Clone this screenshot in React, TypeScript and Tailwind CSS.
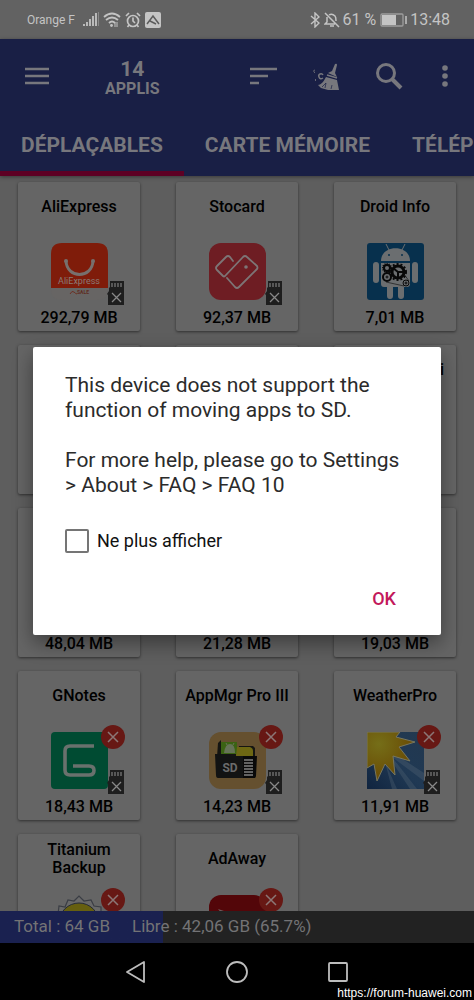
import type { ReactNode } from "react"

interface AppItem {
  id: string
  name?: string
  nameAlign?: string
  size?: string
  icon?: ReactNode
  hasError?: boolean
  noSd?: boolean
}

function AliExpressIcon() {
  return (
    <svg viewBox="0 0 57 57" className="h-full w-full">
      <path d="M0 45V11Q0 0 11 0H46Q57 0 57 11V45Z" fill="#7f1c0a" />
      <path d="M0 45H57V46Q57 57 46 57H11Q0 57 0 46Z" fill="#676564" />
      <path d="M15 18C16 36 41 36 42 18" fill="none" stroke="#77706d" strokeWidth="3" />
      <circle cx="15" cy="18" r="2" fill="#77706d" />
      <circle cx="42" cy="18" r="2" fill="#77706d" />
      <text x="28" y="41" textAnchor="middle" fontSize="9" fill="#8a7b76">AliExpress</text>
      <path d="M19 51Q21 47 23 49T26 51" fill="none" stroke="#6e3023" strokeWidth="1" />
      <text x="32" y="51" textAnchor="middle" fontSize="5" fontWeight="700" fill="#5f2c22">SALE</text>
    </svg>
  )
}

function StocardIcon() {
  return (
    <svg viewBox="0 0 57 57" className="h-full w-full">
      <rect width="57" height="57" rx="12" fill="#6e1d23" />
      <g fill="none" stroke="#7d7576" strokeWidth="1.8" strokeLinejoin="round" strokeLinecap="round">
        <path d="M24 18L21 14Q19 12 17 14L8 23Q6 25 8 27L14 33Q15 34 16 33L34 14Q36 12 38 14L48 23Q49 25 48 26L30 44Q28 46 26 44L18 35" />
      </g>
      <circle cx="37" cy="24" r="1.8" fill="#7d7576" />
    </svg>
  )
}

function DroidInfoIcon() {
  return (
    <svg viewBox="0 0 57 57" className="h-full w-full">
      <rect width="57" height="57" rx="3" fill="#07304d" />
      <g fill="#6b6e70">
        <path d="M14 18C14 1 43 1 43 18Z" />
        <path d="M14 20H43V41Q43 44 40 44H37V53Q37 56 34 56Q31 56 31 53V44H26V53Q26 56 23 56Q20 56 20 53V44H17Q14 44 14 41Z" />
        <rect x="6" y="19" width="6" height="21" rx="3" />
        <rect x="45" y="19" width="6" height="21" rx="3" />
      </g>
      <path d="M22 7L19 1M35 7L38 1" stroke="#6b6e70" strokeWidth="1" />
      <circle cx="22" cy="12" r="1" fill="#07304d" />
      <circle cx="35" cy="12" r="1" fill="#07304d" />
      <g fill="none" stroke="#080808">
        <circle cx="31" cy="29" r="6" strokeWidth="3" />
        <circle cx="31" cy="29" r="8" strokeWidth="2" strokeDasharray="2 2" />
        <path d="M31 29L26 25M31 29V36M31 29H38" strokeWidth="2" />
        <circle cx="20" cy="25" r="3" strokeWidth="2" />
        <circle cx="20" cy="25" r="4" strokeDasharray="1 1" strokeWidth="2" />
        <circle cx="20" cy="34" r="4" strokeWidth="2" />
        <circle cx="20" cy="34" r="1" />
        <circle cx="39" cy="40" r="3" strokeWidth="1" />
        <circle cx="39" cy="40" r="1" />
        <path d="M19 39L37 43M37 31L42 38" strokeWidth=".6" />
      </g>
    </svg>
  )
}

function GNotesIcon() {
  return (
    <svg viewBox="0 0 57 57" className="h-full w-full">
      <rect width="57" height="57" rx="4" fill="#004b32" />
      <path
        d="M43 14H19Q14 14 14 19V38Q14 43 19 43H38Q43 43 43 38.500Q43 34 38 34H22"
        fill="none"
        stroke="#69716d"
        strokeWidth="3.600"
      />
    </svg>
  )
}

function AppMgrIcon() {
  return (
    <svg viewBox="0 0 57 57" className="h-full w-full">
      <rect width="57" height="57" rx="12" fill="#65502f" />
      <path d="M9 11L12 8V11H27V25H8Z" fill="#151512" />
      <path d="M12 10H28V22H12Z" fill="#3b6313" />
      <path d="M15 21Q16 12 21 12T26 21Z" fill="#667358" />
      <path d="M17 11L18 13M25 11L24 13" stroke="#667358" />
      <path d="M30 14H44L46 16V24H29Z" fill="#161612" />
      <path d="M28 15H41Q44 16 44 19V25H27Z" fill="#6d6713" />
      <path d="M6 22H20L22 24H46V46H9Q7 46 7 43Z" fill="#121313" />
      <path d="M34 24H48L47 44Q47 46 45 46H34Z" fill="#090909" />
      <text x="21" y="40" textAnchor="middle" fontSize="12" fontWeight="700" fill="#6b6b6b">SD</text>
      <path d="M35 28H44M35 31H44M35 34H44M35 37H44M35 40H44M35 43H44" stroke="#626262" strokeWidth="2" />
    </svg>
  )
}

function WeatherProIcon() {
  return (
    <svg viewBox="0 0 57 57" className="h-full w-full">
      <defs>
        <linearGradient id="sky" x1="1" y1="0" x2="0" y2="1">
          <stop offset="0" stopColor="#22384f" />
          <stop offset=".5" stopColor="#203954" />
          <stop offset="1" stopColor="#10243f" />
        </linearGradient>
        <radialGradient id="sun" cx="12" cy="12" r="30" gradientUnits="userSpaceOnUse">
          <stop offset="0" stopColor="#756e18" />
          <stop offset="1" stopColor="#6b5007" />
        </radialGradient>
      </defs>
      <rect width="57" height="57" fill="url(#sky)" />
      <path d="M25 25L50 57H43L24 28ZM28 22L57 41V49L25 25ZM18 30L30 57H25Z" fill="#5c6d7c" opacity=".3" />
      <path
        d="M0 0H33L29 5L48 10L32 15L43 29L26 24L28 43L18 32L10 49L7 32L0 36Z"
        fill="url(#sun)"
        stroke="#77765f"
        strokeWidth="1"
      />
    </svg>
  )
}

function TitaniumIcon() {
  return (
    <svg viewBox="0 0 57 57" className="h-full w-full">
      <path
        d="M7 20L8 11L14 12L17 5L23 6L28 1L33 6L40 5L43 11L50 12V20L55 28H2Z"
        fill="#696969"
        stroke="#3a3d44"
        strokeWidth="1.200"
      />
      <circle cx="28" cy="28" r="20" fill="#665f10" stroke="#252a38" strokeWidth="1" />
    </svg>
  )
}

function AdAwayIcon() {
  return (
    <svg viewBox="0 0 57 57" className="h-full w-full">
      <rect width="57" height="57" rx="12" fill="#530609" />
      <path d="M9 14L24 19L17 24Z" fill="#6b5a5b" />
    </svg>
  )
}

const apps: AppItem[] = [
  { id: "aliexpress", name: "AliExpress", size: "292,79 MB", icon: <AliExpressIcon />, noSd: true },
  { id: "stocard", name: "Stocard", size: "92,37 MB", icon: <StocardIcon />, noSd: true },
  { id: "droid-info", name: "Droid Info", size: "7,01 MB", icon: <DroidInfoIcon /> },
  { id: "row2-a" },
  { id: "row2-b" },
  { id: "row2-c", name: "i", nameAlign: "justify-end pr-3" },
  { id: "row3-a", size: "48,04 MB" },
  { id: "row3-b", size: "21,28 MB" },
  { id: "row3-c", size: "19,03 MB" },
  { id: "gnotes", name: "GNotes", size: "18,43 MB", icon: <GNotesIcon />, hasError: true, noSd: true },
  { id: "appmgr", name: "AppMgr Pro III", size: "14,23 MB", icon: <AppMgrIcon />, hasError: true, noSd: true },
  { id: "weatherpro", name: "WeatherPro", size: "11,91 MB", icon: <WeatherProIcon />, hasError: true, noSd: true },
  { id: "titanium", name: "Titanium Backup", icon: <TitaniumIcon />, hasError: true },
  { id: "adaway", name: "AdAway", icon: <AdAwayIcon />, hasError: true },
]

function ErrorBadge() {
  return (
    <svg viewBox="0 0 24 24" className="absolute -top-[7px] left-[50px] size-6">
      <circle cx="12" cy="12" r="12" fill="#671814" />
      <path d="M7 7L17 17M17 7L7 17" stroke="#8b7776" strokeWidth="1.5" />
    </svg>
  )
}

function NoSdBadge() {
  return (
    <svg viewBox="0 0 18 24" className="absolute top-[38px] left-[56px] h-6 w-[18px]">
      <path d="M3 0H17V24H1V14L0 13L2 10V7L3 6Z" fill="#1e1e1e" />
      <path d="M5 2V6M8 2V6M11 2V6M14 2V6" stroke="#707070" strokeWidth="1.4" />
      <path d="M5 12L14 21M14 12L5 21" stroke="#888888" strokeWidth="1.3" />
    </svg>
  )
}

function AppCard({ app }: { app: AppItem }) {
  return (
    <article className="flex h-[149px] min-w-0 flex-col items-center rounded-xs bg-[#656565] shadow-[0_1px_3px_#00000080]">
      <h2
        className={`flex h-[50px] w-full items-center px-2 text-center text-base leading-[18px] font-medium text-black ${
          app.nameAlign ?? "justify-center"
        }`}
      >
        {app.name}
      </h2>
      <div className="relative mt-[11px] size-[57px]">
        {app.icon}
        {app.hasError ? <ErrorBadge /> : null}
        {app.noSd ? <NoSdBadge /> : null}
      </div>
      <p className="mt-2 text-base leading-5 font-medium text-black">{app.size}</p>
    </article>
  )
}

function StatusBar() {
  return (
    <header className="flex h-[39px] shrink-0 items-center bg-[#626262] pr-6 pl-[27px] text-[#c4c4c4]">
      <span className="text-xs">Orange F</span>
      <svg viewBox="0 0 16 16" className="ml-2 size-4">
        <path d="M1 12V14M4 10V14M7 7V14M10 4V14M13 1V14" stroke="currentColor" strokeWidth="1.800" />
        <path d="M15.500 0V14" stroke="#888888" strokeWidth="1" />
      </svg>
      <svg viewBox="0 0 18 16" className="ml-1 h-4 w-[18px]" fill="none" stroke="currentColor" strokeWidth="1.800">
        <path d="M1 5Q9 -2 17 5M3 8Q9 3 15 8M6 11Q9 8 12 11" />
        <circle cx="8.500" cy="13.500" r="1.400" fill="currentColor" stroke="none" />
        <path d="M12 10V15M14 10V15" strokeWidth="1" />
      </svg>
      <svg viewBox="0 0 16 16" className="ml-1 size-4" fill="none" stroke="currentColor" strokeWidth="1.700">
        <circle cx="8" cy="9" r="5.500" />
        <path d="M8 5.500V9L10 11M1 4L4 1M12 1L15 4M4 13L2.500 15M12 13L13.500 15" />
      </svg>
      <svg viewBox="0 0 16 16" className="ml-1 size-4">
        <rect width="16" height="16" rx="2" fill="#c4c4c4" />
        <path d="M2 12L8 4L14 12M5 9L11 12" fill="none" stroke="#5c5c5c" strokeWidth="1.5" />
      </svg>

      <svg viewBox="0 0 10 16" className="ml-auto h-4 w-[10px]" fill="none" stroke="currentColor" strokeWidth="1.4">
        <path d="M1 4L9 11L5 15V1L9 5L1 12" />
      </svg>
      <svg viewBox="0 0 16 16" className="ml-1 size-4" fill="none" stroke="currentColor" strokeWidth="1.5">
        <path d="M1 1L15 15M5 3Q8 1 11 4Q12 5 12 9M3 5V10L1 12H11M6 14H10" />
      </svg>
      <span className="ml-0.5 text-base leading-5">61 %</span>
      <svg viewBox="0 0 28 14" className="ml-1 h-[14px] w-7">
        <rect x="1" y="1" width="22" height="12" rx="1" fill="none" stroke="#9d9d9d" strokeWidth="1.3" />
        <rect x="2" y="2" width="14" height="10" fill="#c4c4c4" />
        <path d="M26 3V11" stroke="#aaaaaa" strokeWidth="2" />
      </svg>
      <span className="ml-0.5 text-base leading-5">13:48</span>
    </header>
  )
}

function Toolbar() {
  return (
    <div className="flex h-[74px] items-center pr-[23px] pl-[25px]">
      <button type="button" aria-label="Menu">
        <svg viewBox="0 0 24 18" className="h-[18px] w-6">
          <path d="M0 2H24M0 9H24M0 16H24" stroke="currentColor" strokeWidth="2.500" />
        </svg>
      </button>
      <h1 className="ml-14 flex flex-col items-center pt-1.5 font-bold">
        <span className="text-[21px] leading-5">14</span>
        <span className="text-base leading-5">APPLIS</span>
      </h1>
      <div className="ml-auto flex items-center gap-9">
        <button type="button" aria-label="Trier">
          <svg viewBox="0 0 27 18" className="h-[18px] w-[27px]">
            <path d="M0 2H27M0 9H18M0 16H9" stroke="currentColor" strokeWidth="2.700" />
          </svg>
        </button>
        <button type="button" aria-label="Nettoyer">
          <svg viewBox="0 0 27 27" className="size-[27px]">
            <path d="M22 1Q24 0 24 2L22 10L24 14L15 10L19 8Z" fill="currentColor" />
            <path d="M14 12L24 15" stroke="currentColor" strokeWidth="1.500" />
            <path d="M13 14L24 17L26 27H15L8 25L5 22Q9 22 13 14Z" fill="currentColor" />
            <path d="M9 24L13 20L12 25M18 26L19 22" stroke="#191f45" strokeWidth=".7" fill="none" />
            <path d="M10 12Q9 10 7 11Q5 12 6 14Q7 17 10 15" fill="none" stroke="currentColor" strokeWidth="1.500" />
            <path d="M2 7Q0 7 1 9L2 10M3 16Q1 17 3 18" fill="none" stroke="currentColor" strokeWidth=".8" />
          </svg>
        </button>
        <button type="button" aria-label="Rechercher">
          <svg viewBox="0 0 27 27" className="size-[27px]" fill="none" stroke="currentColor">
            <circle cx="10" cy="10" r="8.500" strokeWidth="3" />
            <path d="M16 16L25 25" strokeWidth="4" />
          </svg>
        </button>
        <button type="button" aria-label="Plus">
          <svg viewBox="0 0 12 24" className="h-6 w-3" fill="currentColor">
            <circle cx="6" cy="4" r="2.800" />
            <circle cx="6" cy="12" r="2.800" />
            <circle cx="6" cy="20" r="2.800" />
          </svg>
        </button>
      </div>
    </div>
  )
}

function Tabs() {
  return (
    <nav className="flex h-[63px] overflow-hidden text-[21px] font-bold whitespace-nowrap">
      <button type="button" className="shrink-0 border-b-[5px] border-[#5d0024] px-[21px] pt-2">
        DÉPLAÇABLES
      </button>
      <button type="button" className="shrink-0 border-b-[5px] border-transparent px-[21px] pt-2">
        CARTE MÉMOIRE
      </button>
      <button type="button" className="shrink-0 border-b-[5px] border-transparent pt-2 pl-[21px]">
        TÉLÉP
      </button>
    </nav>
  )
}

function SupportDialog() {
  return (
    <div className="absolute inset-0 flex items-center justify-center px-[33px]">
      <div
        role="dialog"
        aria-modal="true"
        className="flex w-full max-w-lg flex-col rounded-xs bg-white px-8 pt-[26px] pb-6 shadow-[0_8px_20px_#00000066]"
      >
        <div className="text-[21px] leading-[25px] text-[#2b2b2b]">
          <p>This device does not support the function of moving apps to SD.</p>
          <p className="mt-[25px]">For more help, please go to Settings &gt; About &gt; FAQ &gt; FAQ 10</p>
        </div>
        <label className="mt-[31px] flex items-center gap-2 text-lg leading-6 text-[#111111]">
          <input
            type="checkbox"
            className="size-6 appearance-none rounded-xs border-2 border-[#757575] bg-white"
          />
          Ne plus afficher
        </label>
        <button
          type="button"
          className="mt-[34px] mr-[13px] self-end text-lg leading-6 font-medium text-[#c2185b]"
        >
          OK
        </button>
      </div>
    </div>
  )
}

function NavigationBar() {
  return (
    <footer className="relative flex h-[57px] shrink-0 items-center justify-center gap-[79px] bg-black text-[#bdbdbd]">
      <button type="button" aria-label="Retour">
        <svg viewBox="0 0 22 22" className="size-[22px]" fill="none" stroke="currentColor" strokeWidth="1.800">
          <path d="M19 1V21L2 11Z" strokeLinejoin="round" />
        </svg>
      </button>
      <button type="button" aria-label="Accueil">
        <svg viewBox="0 0 22 22" className="size-[22px]" fill="none" stroke="currentColor" strokeWidth="1.800">
          <circle cx="11" cy="11" r="10" />
        </svg>
      </button>
      <button type="button" aria-label="Applications récentes">
        <svg viewBox="0 0 22 22" className="size-[22px]" fill="none" stroke="currentColor" strokeWidth="1.800">
          <rect x="2" y="2" width="18" height="18" rx="1" />
        </svg>
      </button>
      <a
        href="https://forum-huawei.com"
        className="absolute right-[2px] bottom-0 font-['Liberation_Sans',sans-serif] text-xs leading-[14px] text-white"
      >
        https://forum-huawei.com
      </a>
    </footer>
  )
}

export default function App() {
  return (
    <div className="flex h-screen flex-col overflow-hidden bg-[#5e5e5e] font-[Roboto,sans-serif]">
      <StatusBar />
      <div className="relative flex min-h-0 flex-1 flex-col">
        <div className="z-0 shrink-0 bg-[#191f45] text-[#77777d] shadow-[0_1px_4px_#00000066]">
          <Toolbar />
          <Tabs />
        </div>
        <main className="min-h-0 flex-1 overflow-hidden">
          <div className="grid grid-cols-3 gap-x-9 gap-y-[14px] px-[18px] pt-[6px]">
            {apps.map((app) => (
              <AppCard key={app.id} app={app} />
            ))}
          </div>
        </main>
        <div className="flex h-8 shrink-0 bg-[#222222] text-[17px] text-[#737375]">
          <div className="flex w-full items-center gap-[22px] bg-linear-to-r from-[#1a2150] from-[34.3%] to-transparent to-[34.3%] pl-[14px]">
            <span>Total : 64 GB</span>
            <span>Libre : 42,06 GB (65.7%)</span>
          </div>
        </div>
        <SupportDialog />
      </div>
      <NavigationBar />
    </div>
  )
}
